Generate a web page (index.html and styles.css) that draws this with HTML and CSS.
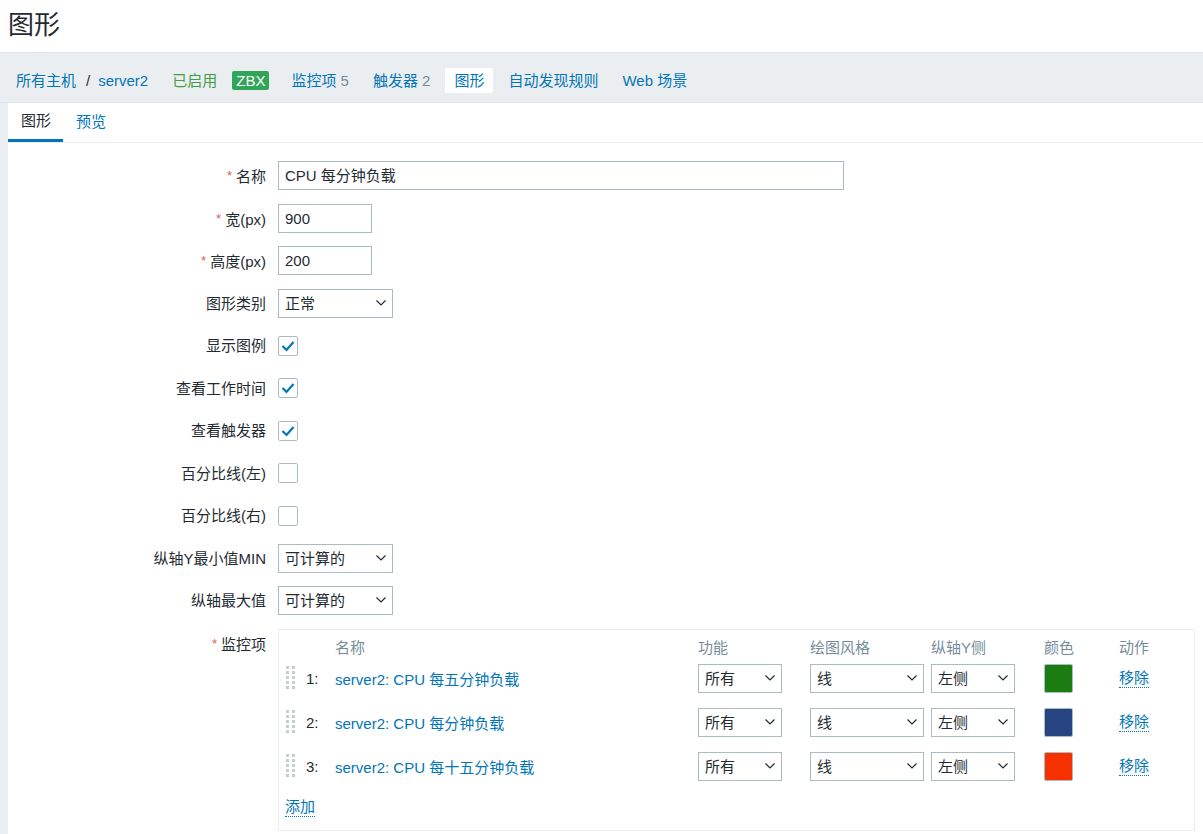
FILE: index.html
```html
<!DOCTYPE html>
<html lang="zh-CN">
<head>
    <title>图形</title>
    <meta charset="utf-8">
    <link rel="stylesheet" href="styles.css">
</head>
<body>
    <header class="page-title">
        <h1>图形</h1>
    </header>

    <nav class="host-nav">
        <span class="nav-item crumbs"><a href="#">所有主机</a><span class="slash">/</span><a href="#">server2</a></span>
        <span class="nav-item status-on">已启用</span>
        <span class="badge">ZBX</span>
        <a class="nav-item" href="#">监控项 <sup>5</sup></a>
        <a class="nav-item" href="#">触发器 <sup>2</sup></a>
        <span class="nav-item active">图形</span>
        <a class="nav-item" href="#">自动发现规则</a>
        <a class="nav-item" href="#">Web 场景</a>
    </nav>

    <main class="container">
        <ul class="tabs">
            <li class="tab selected">图形</li>
            <li class="tab"><a href="#">预览</a></li>
        </ul>

        <div class="form-grid">
            <label class="required">名称</label>
            <div><div class="textbox wide">CPU 每分钟负载</div></div>

            <label class="required">宽(px)</label>
            <div><div class="textbox short">900</div></div>

            <label class="required">高度(px)</label>
            <div><div class="textbox short">200</div></div>

            <label>图形类别</label>
            <div><div class="select w115"><span>正常</span><svg class="chev" width="10" height="6" viewBox="0 0 10 6"><path d="M0.5 0.5 L5 5 L9.5 0.5" fill="none" stroke="#1f2c33" stroke-width="1.2"/></svg></div></div>

            <label>显示图例</label>
            <div><span class="checkbox on"><svg width="14" height="12" viewBox="0 0 14 12"><path d="M1.5 6 L5.5 10 L12.5 2" fill="none" stroke="#0275b8" stroke-width="2.2"/></svg></span></div>

            <label>查看工作时间</label>
            <div><span class="checkbox on"><svg width="14" height="12" viewBox="0 0 14 12"><path d="M1.5 6 L5.5 10 L12.5 2" fill="none" stroke="#0275b8" stroke-width="2.2"/></svg></span></div>

            <label>查看触发器</label>
            <div><span class="checkbox on"><svg width="14" height="12" viewBox="0 0 14 12"><path d="M1.5 6 L5.5 10 L12.5 2" fill="none" stroke="#0275b8" stroke-width="2.2"/></svg></span></div>

            <label>百分比线(左)</label>
            <div><span class="checkbox"></span></div>

            <label>百分比线(右)</label>
            <div><span class="checkbox"></span></div>

            <label>纵轴Y最小值MIN</label>
            <div><div class="select w115"><span>可计算的</span><svg class="chev" width="10" height="6" viewBox="0 0 10 6"><path d="M0.5 0.5 L5 5 L9.5 0.5" fill="none" stroke="#1f2c33" stroke-width="1.2"/></svg></div></div>

            <label>纵轴最大值</label>
            <div><div class="select w115"><span>可计算的</span><svg class="chev" width="10" height="6" viewBox="0 0 10 6"><path d="M0.5 0.5 L5 5 L9.5 0.5" fill="none" stroke="#1f2c33" stroke-width="1.2"/></svg></div></div>

            <label class="required top">监控项</label>
            <div class="items">
                <div class="item-row head">
                    <span></span><span></span>
                    <span>名称</span>
                    <span>功能</span>
                    <span>绘图风格</span>
                    <span>纵轴Y侧</span>
                    <span>颜色</span>
                    <span>动作</span>
                </div>

                <div class="item-row">
                    <span class="drag"><svg width="9" height="24" viewBox="0 0 9 24"><g fill="#c5ced3"><rect x="0" y="0" width="3" height="3"/><rect x="6" y="0" width="3" height="3"/><rect x="0" y="5" width="3" height="3"/><rect x="6" y="5" width="3" height="3"/><rect x="0" y="10" width="3" height="3"/><rect x="6" y="10" width="3" height="3"/><rect x="0" y="15" width="3" height="3"/><rect x="6" y="15" width="3" height="3"/><rect x="0" y="20" width="3" height="3"/><rect x="6" y="20" width="3" height="3"/></g></svg></span>
                    <span class="num">1:</span>
                    <a class="item-name" href="#">server2: CPU 每五分钟负载</a>
                    <div class="select w84"><span>所有</span><svg class="chev" width="10" height="6" viewBox="0 0 10 6"><path d="M0.5 0.5 L5 5 L9.5 0.5" fill="none" stroke="#1f2c33" stroke-width="1.2"/></svg></div>
                    <div class="select w114"><span>线</span><svg class="chev" width="10" height="6" viewBox="0 0 10 6"><path d="M0.5 0.5 L5 5 L9.5 0.5" fill="none" stroke="#1f2c33" stroke-width="1.2"/></svg></div>
                    <div class="select w84"><span>左侧</span><svg class="chev" width="10" height="6" viewBox="0 0 10 6"><path d="M0.5 0.5 L5 5 L9.5 0.5" fill="none" stroke="#1f2c33" stroke-width="1.2"/></svg></div>
                    <span class="swatch green"></span>
                    <a class="dotted" href="#">移除</a>
                </div>

                <div class="item-row">
                    <span class="drag"><svg width="9" height="24" viewBox="0 0 9 24"><g fill="#c5ced3"><rect x="0" y="0" width="3" height="3"/><rect x="6" y="0" width="3" height="3"/><rect x="0" y="5" width="3" height="3"/><rect x="6" y="5" width="3" height="3"/><rect x="0" y="10" width="3" height="3"/><rect x="6" y="10" width="3" height="3"/><rect x="0" y="15" width="3" height="3"/><rect x="6" y="15" width="3" height="3"/><rect x="0" y="20" width="3" height="3"/><rect x="6" y="20" width="3" height="3"/></g></svg></span>
                    <span class="num">2:</span>
                    <a class="item-name" href="#">server2: CPU 每分钟负载</a>
                    <div class="select w84"><span>所有</span><svg class="chev" width="10" height="6" viewBox="0 0 10 6"><path d="M0.5 0.5 L5 5 L9.5 0.5" fill="none" stroke="#1f2c33" stroke-width="1.2"/></svg></div>
                    <div class="select w114"><span>线</span><svg class="chev" width="10" height="6" viewBox="0 0 10 6"><path d="M0.5 0.5 L5 5 L9.5 0.5" fill="none" stroke="#1f2c33" stroke-width="1.2"/></svg></div>
                    <div class="select w84"><span>左侧</span><svg class="chev" width="10" height="6" viewBox="0 0 10 6"><path d="M0.5 0.5 L5 5 L9.5 0.5" fill="none" stroke="#1f2c33" stroke-width="1.2"/></svg></div>
                    <span class="swatch blue"></span>
                    <a class="dotted" href="#">移除</a>
                </div>

                <div class="item-row">
                    <span class="drag"><svg width="9" height="24" viewBox="0 0 9 24"><g fill="#c5ced3"><rect x="0" y="0" width="3" height="3"/><rect x="6" y="0" width="3" height="3"/><rect x="0" y="5" width="3" height="3"/><rect x="6" y="5" width="3" height="3"/><rect x="0" y="10" width="3" height="3"/><rect x="6" y="10" width="3" height="3"/><rect x="0" y="15" width="3" height="3"/><rect x="6" y="15" width="3" height="3"/><rect x="0" y="20" width="3" height="3"/><rect x="6" y="20" width="3" height="3"/></g></svg></span>
                    <span class="num">3:</span>
                    <a class="item-name" href="#">server2: CPU 每十五分钟负载</a>
                    <div class="select w84"><span>所有</span><svg class="chev" width="10" height="6" viewBox="0 0 10 6"><path d="M0.5 0.5 L5 5 L9.5 0.5" fill="none" stroke="#1f2c33" stroke-width="1.2"/></svg></div>
                    <div class="select w114"><span>线</span><svg class="chev" width="10" height="6" viewBox="0 0 10 6"><path d="M0.5 0.5 L5 5 L9.5 0.5" fill="none" stroke="#1f2c33" stroke-width="1.2"/></svg></div>
                    <div class="select w84"><span>左侧</span><svg class="chev" width="10" height="6" viewBox="0 0 10 6"><path d="M0.5 0.5 L5 5 L9.5 0.5" fill="none" stroke="#1f2c33" stroke-width="1.2"/></svg></div>
                    <span class="swatch red"></span>
                    <a class="dotted" href="#">移除</a>
                </div>

                <a class="dotted add" href="#">添加</a>
            </div>
        </div>
    </main>
</body>
</html>
```

FILE: styles.css
```css
body {
    margin: 0;
    background: #ebeef0;
    color: #1f2c33;
    font-family: "Liberation Sans", Arial, "Noto Sans CJK SC", sans-serif;
    font-size: 15px;
}

a {
    color: #0275b8;
    text-decoration: none;
}

/* titulo */
.page-title {
    background: #fff;
    height: 53px;
    box-sizing: border-box;
    border-bottom: 1px solid #dfe4e7;
    padding: 0 8px;
}

.page-title h1 {
    margin: 0;
    font-size: 26px;
    font-weight: normal;
    line-height: 50px;
}

/* navegacao do host */
.host-nav {
    display: flex;
    align-items: center;
    gap: 6px;
    height: 50px;
    box-sizing: border-box;
    padding: 15px 0 10px 7px;
    border-bottom: 1px solid #dfe4e7;
}

.nav-item {
    display: inline-block;
    height: 25px;
    line-height: 25px;
    padding: 0 9px;
    border-radius: 2px;
}

.nav-item sup {
    vertical-align: baseline;
    font-size: 15px;
    color: #768d99;
}

.crumbs .slash {
    color: #1f2c33;
    margin: 0 8px 0 10px;
}

.status-on {
    color: #429e47;
}

.badge {
    background: #31a65b;
    color: #fff;
    height: 19px;
    line-height: 19px;
    padding: 0 4px;
    border-radius: 2px;
    margin-right: 7px;
}

.nav-item.active {
    background: #fff;
    color: #0275b8;
}

/* conteudo */
.container {
    margin-left: 8px;
    background: #fff;
    min-height: 731px;
}

.tabs {
    list-style: none;
    margin: 0;
    padding: 0;
    display: flex;
    height: 39px;
    border-bottom: 1px solid #ebeef0;
}

.tab {
    padding: 0 12px 0 13px;
    line-height: 38px;
}

.tab.selected {
    border-bottom: 3px solid #0275b8;
    line-height: 36px;
}

.form-grid {
    display: grid;
    grid-template-columns: 258px 1fr;
    column-gap: 12px;
    row-gap: 13.5px;
    align-items: center;
    padding-top: 18px;
}

.form-grid label {
    text-align: right;
    height: 29px;
    line-height: 29px;
    overflow: visible;
}

.form-grid label.top {
    align-self: start;
}

.required::before {
    content: "*";
    color: #e45959;
    font-size: 13px;
    margin-right: 4px;
    vertical-align: 2px;
}

.textbox {
    height: 29px;
    box-sizing: border-box;
    border: 1px solid #acbbc2;
    line-height: 27px;
    padding: 0 6px;
    overflow: hidden;
}

.wide { width: 566px; }
.short { width: 94px; }

.select {
    position: relative;
    height: 29px;
    box-sizing: border-box;
    border: 1px solid #acbbc2;
    line-height: 27px;
    padding: 0 6px;
    background: #fff;
    overflow: hidden;
}

.select .chev {
    position: absolute;
    right: 6px;
    top: 10px;
}

.w115 { width: 115px; }
.w114 { width: 114px; }
.w84 { width: 84px; }

.checkbox {
    display: flex;
    align-items: center;
    justify-content: center;
    width: 20px;
    height: 20px;
    box-sizing: border-box;
    border: 1px solid #acbbc2;
    border-radius: 2px;
}

/* tabela de itens */
.items {
    width: 917px;
    box-sizing: border-box;
    border: 1px solid #ebeef0;
    padding: 6px 7px 13px 6px;
}

.item-row {
    display: grid;
    grid-template-columns: 18px 32px 363px 112px 121px 113px 75px auto;
    align-items: center;
    height: 29px;
    margin-bottom: 15px;
}

.item-row.head {
    height: 20px;
    margin-bottom: 8px;
    color: #768d99;
}

.drag {
    display: flex;
    padding-left: 1px;
}

.num {
    padding-left: 3px;
}

.swatch {
    width: 29px;
    height: 29px;
    box-sizing: border-box;
    border: 1px solid #acbbc2;
    border-radius: 2px;
}

.green { background: #1a7c11; }
.blue { background: #274482; }
.red { background: #f63100; }

.dotted {
    justify-self: start;
    border-bottom: 1px dotted #0275b8;
    line-height: 19px;
}

.add {
    display: inline-block;
    margin-top: 1px;
}
```
